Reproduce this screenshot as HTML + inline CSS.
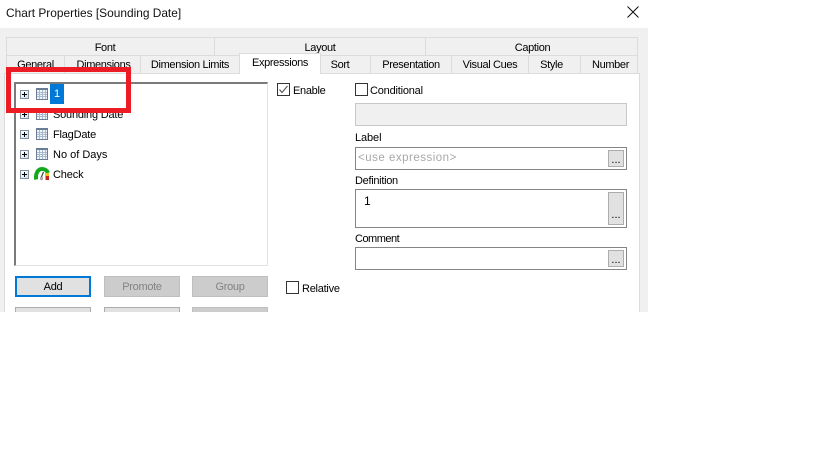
<!DOCTYPE html>
<html>
<head>
<meta charset="utf-8">
<style>
html,body{margin:0;padding:0;background:#fff;}
body{width:819px;height:460px;position:relative;overflow:hidden;font-family:"Liberation Sans",sans-serif;font-size:11px;color:#000;}
.a{position:absolute;box-sizing:border-box;}
.t{position:absolute;white-space:nowrap;line-height:14px;}
.tab{position:absolute;box-sizing:border-box;background:#f0f0f0;border:1px solid #dcdcdc;text-align:center;line-height:19px;white-space:nowrap;color:#000;letter-spacing:-0.35px;}
.btn{position:absolute;box-sizing:border-box;text-align:center;border:1px solid #adadad;letter-spacing:-0.3px;}
.dis{background:#cccccc;color:#838383;border-color:#bfbfbf;}
.en{background:#e1e1e1;}
.exp{position:absolute;left:20px;width:9px;height:9px;box-sizing:border-box;border:1px solid #7f8fa0;background:linear-gradient(135deg,#fff,#d5dde6);}
.exp:before{content:"";position:absolute;left:1px;top:3px;width:5px;height:1px;background:#000;}
.exp:after{content:"";position:absolute;left:3px;top:1px;width:1px;height:5px;background:#000;}
.inp{position:absolute;box-sizing:border-box;background:#fff;border:1px solid #858585;}
.dots{position:absolute;box-sizing:border-box;background:#e1e1e1;border:1px solid #adadad;text-align:center;font-size:11px;line-height:22px;}
.cb{position:absolute;box-sizing:border-box;width:13px;height:13px;background:#fff;border:1px solid #333;}
</style>
</head>
<body>
<div class="t" style="left:6px;top:6px;font-size:11.9px;color:#111;">Chart Properties [Sounding Date]</div>
<svg class="a" style="left:627px;top:6px;" width="12" height="12" viewBox="0 0 12 12"><path d="M0.5 0.5L11.5 11.5M11.5 0.5L0.5 11.5" stroke="#111" stroke-width="1" fill="none"/></svg>

<div class="a" style="left:0;top:28px;width:648px;height:284px;background:#f0f0f0;"></div>

<div class="tab" style="left:6px;top:37px;width:209px;height:19px;padding-right:11px;line-height:20px;">Font</div>
<div class="tab" style="left:214px;top:37px;width:212px;height:19px;line-height:20px;">Layout</div>
<div class="tab" style="left:425px;top:37px;width:213px;height:19px;padding-left:2px;line-height:20px;">Caption</div>

<div class="tab" style="left:6px;top:55px;width:59px;height:19px;">General</div>
<div class="tab" style="left:64px;top:55px;width:77px;height:19px;padding-left:2px;">Dimensions</div>
<div class="tab" style="left:140px;top:55px;width:100px;height:19px;">Dimension Limits</div>
<div class="tab" style="left:320px;top:55px;width:51px;height:19px;padding-right:11px;">Sort</div>
<div class="tab" style="left:370px;top:55px;width:82px;height:19px;">Presentation</div>
<div class="tab" style="left:451px;top:55px;width:78px;height:19px;">Visual Cues</div>
<div class="tab" style="left:528px;top:55px;width:53px;height:19px;padding-right:6px;">Style</div>
<div class="tab" style="left:580px;top:55px;width:58px;height:19px;padding-left:3px;">Number</div>

<div class="a" style="left:4px;top:73px;width:636px;height:239px;background:#fff;border:1px solid #dcdcdc;border-bottom:none;"></div>
<div class="tab" style="left:239px;top:53px;width:82px;height:21px;background:#fff;border-bottom:none;line-height:19px;">Expressions</div>

<div class="a" style="left:14px;top:82px;width:254px;height:184px;background:#fff;border-top:2px solid #7b7b7b;border-left:2px solid #7b7b7b;border-right:1px solid #e3e3e3;border-bottom:1px solid #e3e3e3;"></div>

<div class="exp" style="top:90px;"></div>
<div class="exp" style="top:110px;"></div>
<div class="exp" style="top:130px;"></div>
<div class="exp" style="top:150px;"></div>
<div class="exp" style="top:170px;"></div>

<svg class="a" style="left:36px;top:88px;" width="12" height="12" viewBox="0 0 12 12"><rect x="0" y="0" width="12" height="12" fill="#6a7d96"/><rect x="1" y="2" width="10" height="9" fill="#f2f5f9"/><path d="M1 4.5H11M1 6.5H11M1 8.5H11M3.5 2V11M6.5 2V11M9.5 2V11" stroke="#a9bace" stroke-width="1"/></svg>
<svg class="a" style="left:36px;top:108px;" width="12" height="12" viewBox="0 0 12 12"><rect x="0" y="0" width="12" height="12" fill="#6a7d96"/><rect x="1" y="2" width="10" height="9" fill="#f2f5f9"/><path d="M1 4.5H11M1 6.5H11M1 8.5H11M3.5 2V11M6.5 2V11M9.5 2V11" stroke="#a9bace" stroke-width="1"/></svg>
<svg class="a" style="left:36px;top:128px;" width="12" height="12" viewBox="0 0 12 12"><rect x="0" y="0" width="12" height="12" fill="#6a7d96"/><rect x="1" y="2" width="10" height="9" fill="#f2f5f9"/><path d="M1 4.5H11M1 6.5H11M1 8.5H11M3.5 2V11M6.5 2V11M9.5 2V11" stroke="#a9bace" stroke-width="1"/></svg>
<svg class="a" style="left:36px;top:148px;" width="12" height="12" viewBox="0 0 12 12"><rect x="0" y="0" width="12" height="12" fill="#6a7d96"/><rect x="1" y="2" width="10" height="9" fill="#f2f5f9"/><path d="M1 4.5H11M1 6.5H11M1 8.5H11M3.5 2V11M6.5 2V11M9.5 2V11" stroke="#a9bace" stroke-width="1"/></svg>
<svg class="a" style="left:34px;top:167px;" width="16" height="14" viewBox="0 0 16 14"><path d="M2.2 12.5C1.2 6.5 4 2 8 2C11 2 13 3.5 14 6" fill="none" stroke="#12a81f" stroke-width="4"/><path d="M7 11L9.5 5" stroke="#444" stroke-width="1.2"/><rect x="11" y="6" width="4" height="3" fill="#e8c020"/><rect x="11.5" y="9" width="3.5" height="4" fill="#c5221f"/><rect x="6" y="10" width="3" height="3" fill="#aaa"/></svg>

<div class="a" style="left:50px;top:84px;width:14px;height:20px;background:#0078d7;color:#fff;line-height:20px;text-align:center;">1</div>
<div class="t" style="left:53px;top:108px;letter-spacing:-0.2px;">Sounding Date</div>
<div class="t" style="left:53px;top:128px;letter-spacing:-0.2px;">FlagDate</div>
<div class="t" style="left:53px;top:148px;">No of Days</div>
<div class="t" style="left:53px;top:168px;letter-spacing:-0.15px;">Check</div>

<div class="a" style="left:6px;top:67px;width:125px;height:46px;border:5px solid #ed1c24;"></div>

<div class="cb" style="left:277px;top:83px;"></div>
<svg class="a" style="left:277px;top:83px;" width="13" height="13" viewBox="0 0 13 13"><path d="M2.5 6.5L5 9.5L10.5 3" fill="none" stroke="#555" stroke-width="1.1"/></svg>
<div class="t" style="left:293px;top:84px;letter-spacing:-0.3px;">Enable</div>
<div class="cb" style="left:355px;top:83px;"></div>
<div class="t" style="left:370px;top:84px;letter-spacing:-0.2px;">Conditional</div>

<div class="a" style="left:355px;top:103px;width:272px;height:23px;background:#f0f0f0;border:1px solid #c8c8c8;"></div>

<div class="t" style="left:355px;top:131px;letter-spacing:-0.1px;">Label</div>
<div class="inp" style="left:355px;top:147px;width:272px;height:23px;"></div>
<div class="t" style="left:358px;top:151px;color:#a8a8a8;font-size:11.5px;letter-spacing:0.5px;">&lt;use expression&gt;</div>
<div class="dots" style="left:608px;top:150px;width:16px;height:17px;line-height:19px;">...</div>

<div class="t" style="left:355px;top:174px;letter-spacing:-0.3px;">Definition</div>
<div class="inp" style="left:355px;top:189px;width:272px;height:39px;"></div>
<div class="t" style="left:364px;top:194px;font-size:12px;">1</div>
<div class="dots" style="left:608px;top:192px;width:16px;height:33px;line-height:44px;">...</div>

<div class="t" style="left:355px;top:232px;letter-spacing:-0.5px;">Comment</div>
<div class="inp" style="left:355px;top:247px;width:272px;height:23px;"></div>
<div class="dots" style="left:608px;top:250px;width:16px;height:17px;line-height:19px;">...</div>

<div class="btn en" style="left:15px;top:276px;width:76px;height:21px;border:2px solid #0078d7;line-height:19px;">Add</div>
<div class="btn dis" style="left:104px;top:276px;width:76px;height:21px;line-height:21px;">Promote</div>
<div class="btn dis" style="left:192px;top:276px;width:76px;height:21px;line-height:21px;">Group</div>

<div class="cb" style="left:286px;top:281px;"></div>
<div class="t" style="left:302px;top:282px;letter-spacing:-0.25px;">Relative</div>

<div class="btn en" style="left:15px;top:307px;width:76px;height:5px;border-bottom:none;"></div>
<div class="btn en" style="left:104px;top:307px;width:76px;height:5px;border-bottom:none;"></div>
<div class="btn dis" style="left:192px;top:307px;width:76px;height:5px;border-bottom:none;"></div>
</body>
</html>
